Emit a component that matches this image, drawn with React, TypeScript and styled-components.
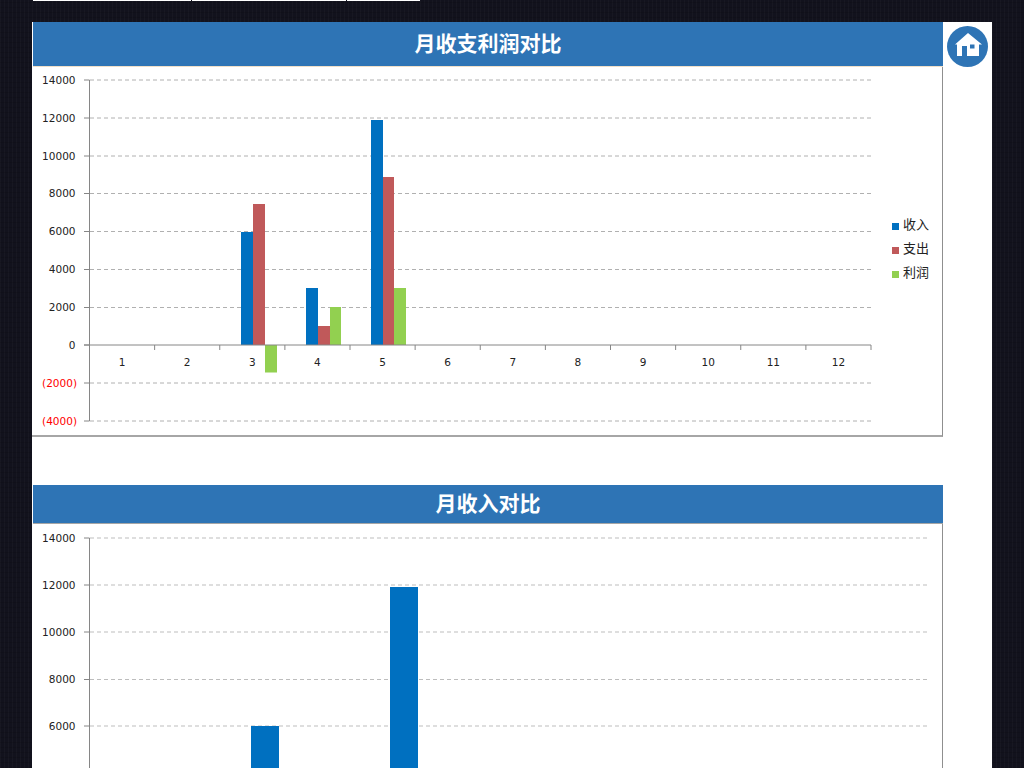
import React from "react";
import styled, { createGlobalStyle } from "styled-components";

const Global = createGlobalStyle`
  html, body { margin: 0; padding: 0; background: #13131f; }
  #root { width: 1024px; height: 768px; overflow: hidden; }
`;

const Page = styled.div`
  width: 1024px;
  height: 768px;
  overflow: hidden;
  box-sizing: border-box;
  padding-left: 32px;
  display: flex;
  flex-direction: column;
  background-color: #12121d;
  background-image:
    repeating-linear-gradient(90deg, rgba(255,255,255,0.022) 0 1px, transparent 1px 4px),
    repeating-linear-gradient(0deg, rgba(0,0,0,0.12) 0 1px, transparent 1px 5px);
`;

const TopStrip = styled.div`
  display: flex;
  gap: 1px;
  height: 1px;
  margin: 0 0 1px 1px;
  flex: none;
`;

const StripCell = styled.div<{ $w: number }>`
  width: ${(p) => p.$w}px;
  background: #fff;
`;

const Sheet = styled.main`
  margin-top: 20px;
  width: 960px;
  flex: none;
  background: #fff;
  display: flex;
  flex-direction: column;
  gap: 48px;
`;

const TopRow = styled.div`
  display: flex;
  align-items: flex-start;
`;

const Panel = styled.section`
  width: 912px;
  flex: none;
  box-sizing: border-box;
  padding-left: 1px;
`;

const Title = styled.h2<{ $h: number; $edge: string }>`
  margin: 0;
  height: ${(p) => p.$h}px;
  box-sizing: border-box;
  padding-bottom: 3px;
  background: #2e74b5;
  border-bottom: 1px solid ${(p) => p.$edge};
  color: #fff;
  font: bold 21px/1 "Noto Sans CJK SC", "Liberation Sans", sans-serif;
  display: flex;
  align-items: center;
  justify-content: center;
  width: 910px;
`;

const ChartBox = styled.div<{ $h: number; $bottom: boolean }>`
  height: ${(p) => p.$h}px;
  box-sizing: border-box;
  width: 911px;
  margin-left: -1px;
  padding-left: 1px;
  border-right: 1px solid #8f8f8f;
  border-bottom: ${(p) => (p.$bottom ? "2px solid #a6a6a6" : "none")};
  overflow: hidden;
`;

const HomeButton = styled.a`
  display: block;
  width: 41px;
  height: 41px;
  margin: 4px 0 0 3px;
  flex: none;
`;

const ChartSvg = styled.svg`
  display: block;
`;

const AxisLabel = styled.text<{ $neg?: boolean }>`
  font: 10.5px "DejaVu Sans", "Liberation Sans", sans-serif;
  fill: ${(p) => (p.$neg ? "#ff0000" : "#222")};
`;

const LegendLabel = styled.text`
  font: 13px "Noto Sans CJK SC", sans-serif;
  fill: #222;
`;

type Bar = { x: number; w: number; top: number; bottom: number; color: string };
type Tick = { y: number; label: string; neg?: boolean };

const BLUE = "#0070c0";
const RED = "#c0595a";
const GREEN = "#92d050";

const ticks1: Tick[] = [
  { y: 80, label: "14000" },
  { y: 118, label: "12000" },
  { y: 156, label: "10000" },
  { y: 193.5, label: "8000" },
  { y: 231.5, label: "6000" },
  { y: 269.5, label: "4000" },
  { y: 307.5, label: "2000" },
  { y: 345, label: "0" },
  { y: 383, label: "(2000)", neg: true },
  { y: 421, label: "(4000)", neg: true },
];

const bars1: Bar[] = [
  { x: 241, w: 12, top: 232, bottom: 345, color: BLUE },
  { x: 253, w: 12, top: 204, bottom: 345, color: RED },
  { x: 265, w: 12, top: 345, bottom: 372.5, color: GREEN },
  { x: 306, w: 12, top: 288, bottom: 345, color: BLUE },
  { x: 318, w: 12, top: 326, bottom: 345, color: RED },
  { x: 330, w: 11, top: 307, bottom: 345, color: GREEN },
  { x: 371, w: 12, top: 120, bottom: 345, color: BLUE },
  { x: 383, w: 11, top: 177, bottom: 345, color: RED },
  { x: 394, w: 12, top: 288, bottom: 345, color: GREEN },
];

const ticks2: Tick[] = [
  { y: 538, label: "14000" },
  { y: 585, label: "12000" },
  { y: 632, label: "10000" },
  { y: 679.5, label: "8000" },
  { y: 726, label: "6000" },
];

const bars2: Bar[] = [
  { x: 251, w: 28, top: 726, bottom: 770, color: BLUE },
  { x: 390, w: 28, top: 587, bottom: 770, color: BLUE },
];

const legend = [
  { y: 225, color: BLUE, label: "收入" },
  { y: 249, color: RED, label: "支出" },
  { y: 273, color: GREEN, label: "利润" },
];

const Chart: React.FC<{
  top: number;
  height: number;
  ticks: Tick[];
  bars: Bar[];
  gridEnd: number;
  axisEnd: number;
  grid: string;
  withCategories?: boolean;
}> = ({ top, height, ticks, bars, gridEnd, axisEnd, grid, withCategories }) => {
  const step = (871 - 89.5) / 12;
  return (
    <ChartSvg width={910} height={height} viewBox={`33 ${top} 910 ${height}`}>
      <line x1={89.5} x2={89.5} y1={ticks[0].y} y2={axisEnd} stroke="#868686" />
      {ticks.map((t) => (
        <g key={t.label}>
          <line x1={84} x2={89.5} y1={t.y} y2={t.y} stroke="#868686" />
          {t.label !== "0" && (
            <line x1={90} x2={gridEnd} y1={t.y} y2={t.y} stroke={grid} strokeDasharray="4 3" />
          )}
          <AxisLabel $neg={t.neg} x={t.neg ? 77 : 75.5} y={t.y + 3.5} textAnchor="end">
            {t.label}
          </AxisLabel>
        </g>
      ))}
      {bars.map((b) => (
        <rect key={`${b.x}`} x={b.x} y={b.top} width={b.w} height={b.bottom - b.top} fill={b.color} />
      ))}
      {withCategories && (
        <>
          <line x1={84} x2={871} y1={345} y2={345} stroke="#868686" />
          {Array.from({ length: 12 }, (_, i) => (
            <g key={i}>
              <line
                x1={89.5 + (i + 1) * step}
                x2={89.5 + (i + 1) * step}
                y1={345}
                y2={350}
                stroke="#868686"
              />
              <AxisLabel x={89.5 + (i + 0.5) * step} y={366} textAnchor="middle">
                {i + 1}
              </AxisLabel>
            </g>
          ))}
          {legend.map((l) => (
            <g key={l.label}>
              <rect x={892} y={l.y - 2} width={7} height={7} fill={l.color} />
              <LegendLabel x={903} y={l.y + 3.5}>
                {l.label}
              </LegendLabel>
            </g>
          ))}
        </>
      )}
    </ChartSvg>
  );
};

const HomeIcon = () => (
  <svg width={41} height={41} viewBox="0 0 41 41">
    <circle cx={20.5} cy={20.5} r={20.5} fill="#2e74b5" />
    <path d="M21 7 L8 18.5 H10 V30 H15 V20 H20 V30 H32 V18.5 H35 Z" fill="#fff" />
    <rect x={23} y={18.5} width={4.5} height={4} fill="#2e74b5" />
  </svg>
);

export default function App() {
  return (
    <Page>
      <Global />
      <TopStrip>
        <StripCell $w={158} />
        <StripCell $w={154} />
        <StripCell $w={73} />
      </TopStrip>
      <Sheet>
        <TopRow>
          <Panel>
            <Title $h={45} $edge="#f0dfc8">月收支利润对比</Title>
            <ChartBox $h={370} $bottom>
              <Chart
                top={67}
                height={368}
                ticks={ticks1}
                bars={bars1}
                gridEnd={871}
                axisEnd={421}
                grid="#b0b0b0"
                withCategories
              />
            </ChartBox>
          </Panel>
          <HomeButton href="#" aria-label="home">
            <HomeIcon />
          </HomeButton>
        </TopRow>
        <Panel>
          <Title $h={39} $edge="#a6a6a6">月收入对比</Title>
          <ChartBox $h={300} $bottom={false}>
            <Chart
              top={524}
              height={300}
              ticks={ticks2}
              bars={bars2}
              gridEnd={928}
              axisEnd={824}
              grid="#bdbdbd"
            />
          </ChartBox>
        </Panel>
      </Sheet>
    </Page>
  );
}
